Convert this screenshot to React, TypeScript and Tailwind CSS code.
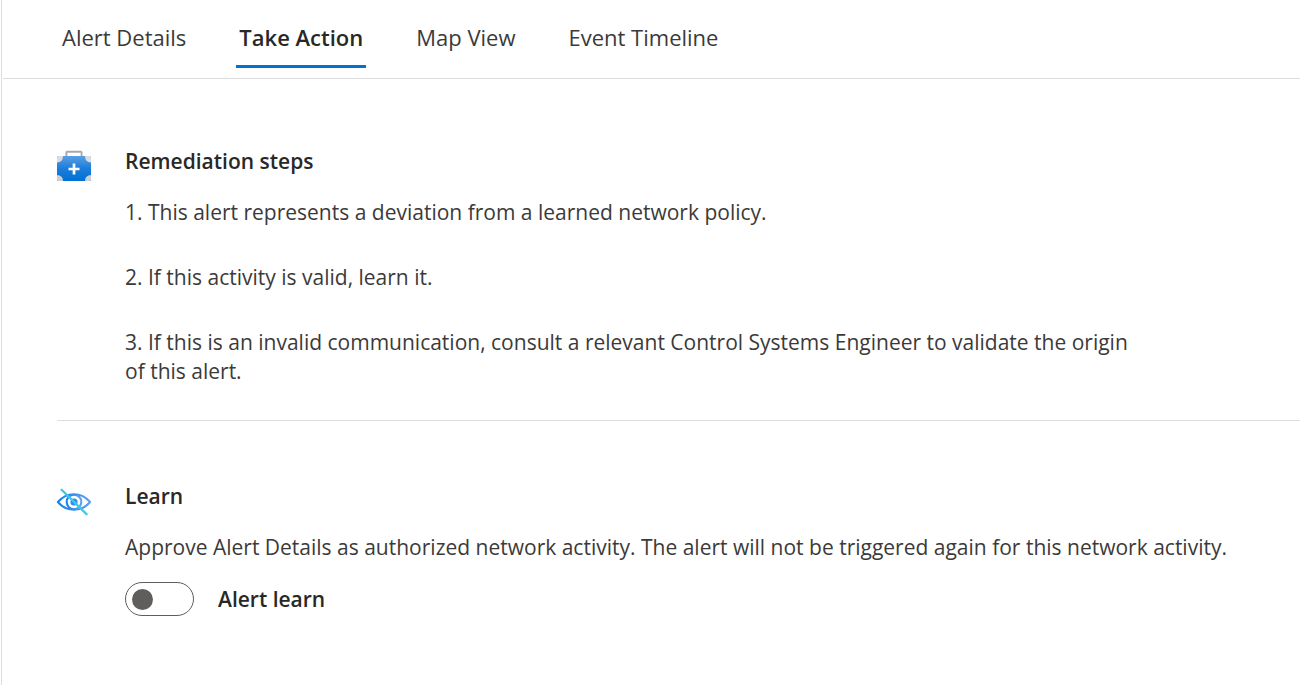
import { useState } from "react";
import type { ReactNode } from "react";

const tabs = ["Alert Details", "Take Action", "Map View", "Event Timeline"];

const steps = [
  "1. This alert represents a deviation from a learned network policy.",
  "2. If this activity is valid, learn it.",
  "3. If this is an invalid communication, consult a relevant Control Systems Engineer to validate the origin of this alert.",
];

function FirstAidIcon() {
  return (
    <svg width="36" height="32" viewBox="0 0 36 32" className="block" aria-hidden="true">
      <defs>
        <linearGradient id="case" x1="0" y1="0" x2="0" y2="1">
          <stop offset="0" stopColor="#5a9fe3" />
          <stop offset="0.5" stopColor="#1b7ddb" />
          <stop offset="1" stopColor="#0071d2" />
        </linearGradient>
      </defs>
      <path d="M10.4 7.5V2.5Q10.4 1.7 11.2 1.7H24.8Q25.6 1.7 25.6 2.5V7.5" fill="none" stroke="#a9a9ad" strokeWidth="1.9" />
      <rect x="1" y="6" width="34" height="25" rx="1.5" fill="url(#case)" />
      <path d="M1 12.5V7.5Q1 6 2.5 6H7Q7 12 1 12.5Z" fill="#dcdcdf" />
      <path d="M35 12.5V7.5Q35 6 33.5 6H29Q29 12 35 12.5Z" fill="#dcdcdf" />
      <path d="M1 25V29.5Q1 31 2.5 31H7Q7 25.5 1 25Z" fill="#cfcfd2" />
      <path d="M35 25V29.5Q35 31 33.5 31H29Q29 25.5 35 25Z" fill="#cfcfd2" />
      <path d="M18 13.5V24.5M12.5 19H23.5" stroke="#fff" strokeWidth="2.7" />
    </svg>
  );
}

function HiddenEyeIcon() {
  return (
    <svg width="36" height="34" viewBox="0 -3 36 34" className="block" aria-hidden="true">
      <defs>
        <linearGradient id="eye" x1="0" y1="0" x2="1" y2="0">
          <stop offset="0" stopColor="#1683e8" />
          <stop offset="1" stopColor="#5ea0ef" />
        </linearGradient>
      </defs>
      <path
        d="M1.9 14C6.5 8.6 12 6.2 18 6.2S29.5 8.6 34.1 14C29.5 19.4 24 21.8 18 21.8S6.5 19.4 1.9 14Z"
        fill="none"
        stroke="url(#eye)"
        strokeWidth="2.1"
        strokeLinejoin="round"
      />
      <circle cx="18" cy="14" r="7.3" fill="none" stroke="url(#eye)" strokeWidth="2.1" />
      <circle cx="18" cy="14" r="3.6" fill="#338af0" />
      <path d="M5.6 1.8L30.6 26.2" stroke="#32cdec" strokeWidth="2.3" strokeLinecap="round" />
    </svg>
  );
}

function Section({ icon, title, children }: { icon: ReactNode; title: string; children: ReactNode }) {
  return (
    <section className="flex gap-[33px]">
      <div className="w-9 shrink-0 pt-1">{icon}</div>
      <div className="min-w-0 flex-1">
        <h2 className="text-[21px] leading-[30px] font-semibold text-[#292827]">{title}</h2>
        {children}
      </div>
    </section>
  );
}

export default function App() {
  const [active, setActive] = useState("Take Action");
  const [learn, setLearn] = useState(false);

  return (
    <main className="ml-px min-h-screen border-l border-[#dddddd] bg-white font-['Open_Sans','Noto_Sans',sans-serif] text-[21px] leading-[29px] text-[#3b3a39]">
      <div role="tablist" className="ml-px flex gap-[47px] border-b border-[#dddddd] pt-[22px] pb-[10px] pl-14 text-[22px]">
        {tabs.map((tab) => (
          <button
            key={tab}
            type="button"
            role="tab"
            aria-selected={active === tab}
            onClick={() => setActive(tab)}
            className={
              active === tab
                ? "border-b-[3px] border-[#0072d4] px-[3px] pb-[13px] leading-[30px] font-semibold text-[#292827]"
                : "border-b-[3px] border-transparent px-[3px] pb-[13px] leading-[30px]"
            }
          >
            {tab}
          </button>
        ))}
      </div>

      <div className="pl-[54px]">
        <div className="ml-px border-b border-[#dddddd] pt-[67px] pb-[34px]">
          <div className="-ml-px">
            <Section icon={<FirstAidIcon />} title="Remediation steps">
              <ol className="mt-[22px] flex max-w-[1020px] flex-col gap-9">
                {steps.map((step) => (
                  <li key={step}>{step}</li>
                ))}
              </ol>
            </Section>
          </div>
        </div>
        <div className="pt-[60px]">
          <Section icon={<HiddenEyeIcon />} title="Learn">
            <p className="mt-[22px]">
              Approve Alert Details as authorized network activity. The alert will not be triggered again for this network activity.
            </p>
            <label className="mt-5 flex w-fit items-center gap-6 font-semibold text-[#292827]">
              <input
                type="checkbox"
                role="switch"
                checked={learn}
                onChange={(e) => setLearn(e.target.checked)}
                className="flex h-[34px] w-[69px] appearance-none items-center rounded-full border border-[#605e5c] px-1.5 before:size-[21px] before:rounded-full before:bg-[#605e5c] before:content-[''] checked:justify-end"
              />
              Alert learn
            </label>
          </Section>
        </div>
      </div>
    </main>
  );
}
